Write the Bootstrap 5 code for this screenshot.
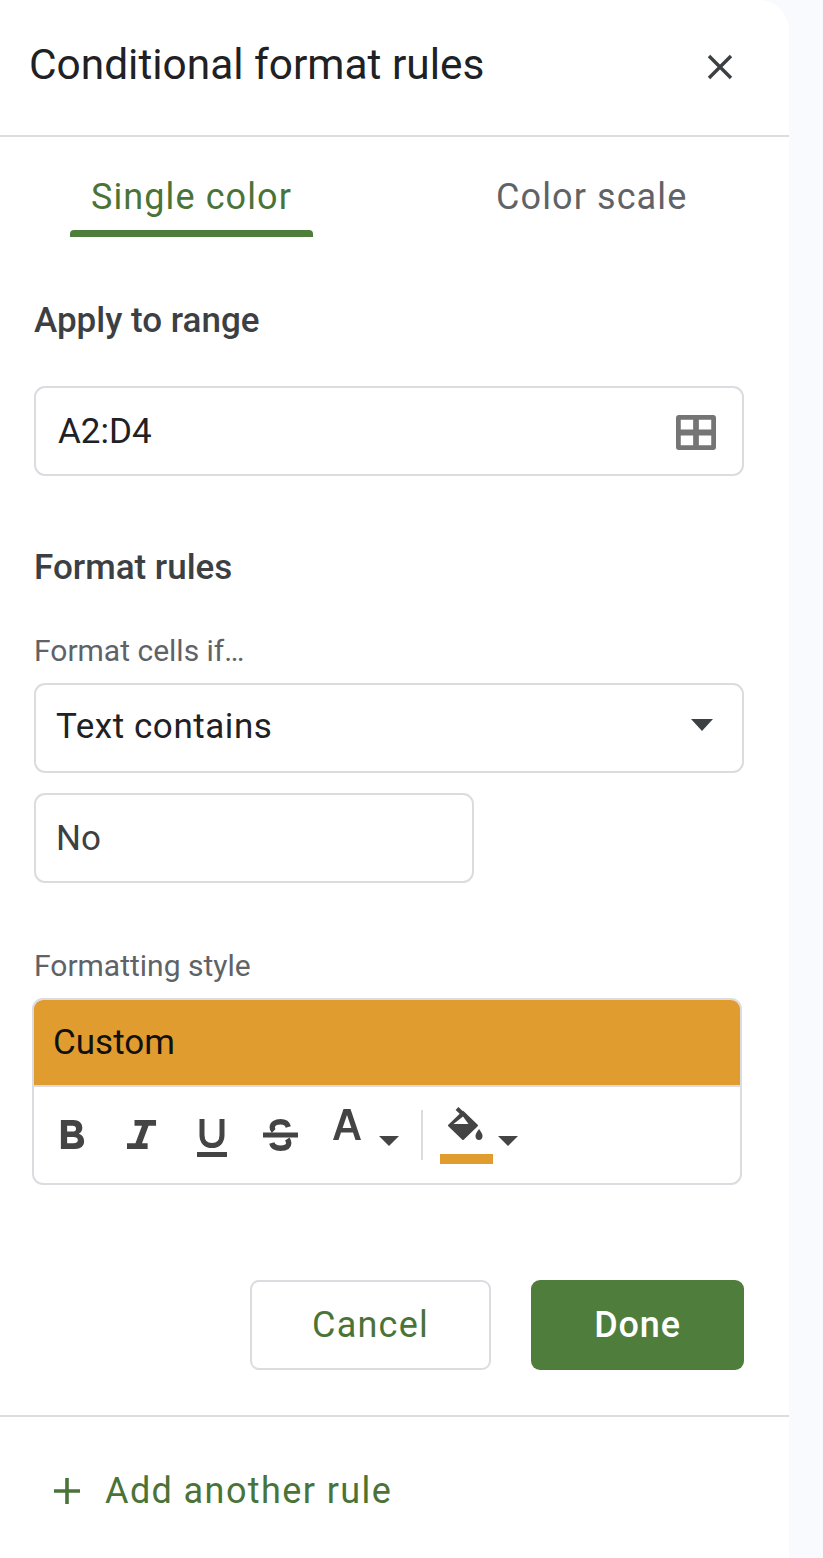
<!DOCTYPE html>
<html lang="en">
<head>
  <meta charset="UTF-8">
  <meta name="viewport" content="width=device-width, initial-scale=1.0">
  <title>Conditional format rules</title>
  <link rel="stylesheet" href="https://cdn.jsdelivr.net/npm/bootstrap@5.3.0/dist/css/bootstrap.min.css">
  <style>
    body {
      font-family: Roboto, "Liberation Sans", sans-serif;
      background-color: #f9fafd;
      color: #202124;
    }
    .side-panel {
      width: 789px;
      height: 1558px;
      background-color: #fff;
      border-top-right-radius: 30px;
    }
    .panel-head {
      height: 137px;
      padding: 0 52px 1px 29px;
      border-bottom: 2px solid #dadce0;
    }
    .panel-title {
      font-size: 42.4px;
      font-weight: 400;
      margin: 0 0 3px;
      line-height: 1;
    }
    .close-btn {
      width: 34px;
      height: 34px;
      padding: 0;
      border: 0;
      background: none;
      line-height: 0;
    }
    .tab-row {
      height: 100px;
      padding-left: 70px;
    }
    .tab-item {
      font-size: 36px;
      letter-spacing: 1.1px;
      line-height: 1;
      color: #5f6368;
      padding-top: 42px;
      text-align: center;
    }
    .tab-one {
      width: 243px;
      color: #4a7337;
    }
    .tab-two {
      margin-left: 183px;
    }
    .tab-bar {
      height: 7px;
      background-color: #4f7d3c;
      border-radius: 4px 4px 0 0;
    }
    .panel-body-area {
      padding: 0 45px 0 34px;
    }
    .section-title {
      font-size: 35px;
      font-weight: 500;
      color: #3c4043;
      line-height: 1;
      margin: 0;
    }
    .section-a { margin-top: 66px; }
    .section-b { margin-top: 74px; }
    .field-label {
      font-size: 30px;
      color: #5f6368;
      line-height: 1;
      margin: 0;
    }
    .label-a { margin-top: 51px; }
    .label-b { margin-top: 68px; }
    .field-box {
      height: 90px;
      border: 2px solid #dadce0;
      border-radius: 11px;
      font-size: 35px;
      color: #202124;
      padding: 2px 26px 0 22px;
    }
    .range-box { margin-top: 48px; }
    .select-box {
      margin-top: 17px;
      padding: 0 29px 2px 20px;
      letter-spacing: .55px;
    }
    .select-caret { margin-top: -4px; }
    .field-short {
      width: 440px;
      margin-top: 20px;
      color: #3c4043;
      padding-left: 20px;
    }
    .style-box {
      width: 710px;
      margin: 17px 0 0 -2px;
      height: 187px;
      border: 2px solid #dadce0;
      border-radius: 11px;
      overflow: hidden;
    }
    .style-preview {
      height: 87px;
      background-color: #e09c2f;
      color: #111;
      font-size: 35px;
      padding: 2px 0 0 19px;
      border-bottom: 2px solid #dadce0;
    }
    .style-tools { padding-left: 20px; }
    .tool-b { margin: 32px 0 0 6px; }
    .tool-i { margin: 32px 0 0 42px; }
    .tool-u { margin: 32px 0 0 40px; }
    .tool-s { margin: 32px 0 0 36px; }
    .tool-a { margin: 22px 0 0 35px; }
    .tool-caret { margin: 49px 0 0 18px; }
    .tool-sep {
      width: 2px;
      height: 50px;
      margin: 23px 0 0 22px;
      background-color: #dadce0;
    }
    .tool-fill { margin: 20px 0 0 17px; }
    .fill-caret { margin: 49px 0 0 5px; }
    .action-row {
      gap: 40px;
      margin-top: 95px;
    }
    .action-btn {
      height: 90px;
      font-size: 36px;
      letter-spacing: .8px;
      font-weight: 500;
      border-radius: 9px;
    }
    .btn-cancel {
      width: 241px;
      font-weight: 400;
      letter-spacing: 1.2px;
      color: #4a7337;
      background: #fff;
      border: 2px solid #dadce0;
    }
    .btn-done {
      width: 213px;
      background-color: #4f7d3c;
      border: 0;
      color: #fff;
    }
    .panel-foot {
      margin-top: 45px;
      border-top: 2px solid #dadce0;
      height: 142px;
      padding: 8px 0 0 54px;
      color: #4a7337;
      font-size: 36px;
      letter-spacing: 1.4px;
    }
    .foot-text { margin-left: 25px; }
  </style>
</head>
<body>

<div class="side-panel">
  <div class="panel-head d-flex align-items-center justify-content-between">
    <h1 class="panel-title">Conditional format rules</h1>
    <button class="close-btn" type="button" aria-label="Close">
      <svg width="34" height="34" viewBox="0 0 34 34"><path d="M6 6 28 28M28 6 6 28" stroke="#3c4043" stroke-width="3.4" fill="none"/></svg>
    </button>
  </div>

  <div class="tab-row d-flex">
    <div class="tab-item tab-one d-flex flex-column justify-content-between">
      <span>Single color</span>
      <div class="tab-bar"></div>
    </div>
    <div class="tab-item tab-two">Color scale</div>
  </div>

  <div class="panel-body-area">
    <p class="section-title section-a">Apply to range</p>
    <div class="field-box range-box d-flex align-items-center justify-content-between">
      <span>A2:D4</span>
      <svg width="40" height="35" viewBox="0 0 42 36" preserveAspectRatio="none"><path fill="#757575" fill-rule="evenodd" d="M3 0H39a3 3 0 0 1 3 3V33a3 3 0 0 1-3 3H3a3 3 0 0 1-3-3V3a3 3 0 0 1 3-3ZM5 5V15H18V5ZM24 5V15H37V5ZM5 21V31H18V21ZM24 21V31H37V21Z"/></svg>
    </div>

    <p class="section-title section-b">Format rules</p>
    <p class="field-label label-a">Format cells if…</p>
    <div class="field-box d-flex align-items-center justify-content-between select-box">
      <span>Text contains</span>
      <svg class="select-caret" width="22" height="12" viewBox="0 0 22 12"><path fill="#3c4043" d="M0 0H22L11 12Z"/></svg>
    </div>
    <div class="field-box field-short d-flex align-items-center">No</div>

    <p class="field-label label-b">Formatting style</p>
    <div class="style-box">
      <div class="style-preview d-flex align-items-center">Custom</div>
      <div class="style-tools d-flex align-items-start">
        <svg class="tool-b" width="25" height="31" viewBox="0 0 28 32" preserveAspectRatio="none"><path fill="#444" fill-rule="evenodd" d="M1 1H15C21 1 25 4 25 9C25 12 23.500 14 21 15.200C24.500 16 27 19 27 23C27 28 23 31 17 31H1ZM8 7V13H14C16.500 13 18 12 18 10C18 8 16.500 7 14 7ZM8 18.500V25H15C18 25 20 24 20 21.700C20 19.500 18 18.500 15 18.500Z"/></svg>
        <svg class="tool-i" width="30" height="31" viewBox="0 0 32 32" preserveAspectRatio="none"><path fill="#444" d="M8 1H31V7H23L16 25H22V31H0V25H9L16 7H8Z"/></svg>
        <svg class="tool-u" width="30" height="38" viewBox="0 0 30 38"><path fill="none" stroke="#444" stroke-width="5" d="M5 0V16C5 23 9 26.500 15 26.500C21 26.500 25 23 25 16V0"/><path fill="#444" d="M0 33H30V38H0Z"/></svg>
        <svg class="tool-s" width="35" height="32" viewBox="0 0 36 32" preserveAspectRatio="none"><path fill="none" stroke="#444" stroke-width="5.500" d="M26 8C25 4 22 2.800 18 2.800C13 2.800 9.500 5 9.500 8.500C9.500 10 10 11 11 12M25 20C26 21.500 26.500 22.500 26.500 24C26.500 27.500 23 29.200 18 29.200C13.500 29.200 10 28 9 24"/><path fill="#444" d="M0 13.500H36V18.500H0Z"/></svg>
        <svg class="tool-a" width="28" height="31" viewBox="0 0 28 31"><path fill="#444" fill-rule="evenodd" d="M10.500 0H17.500L28 31H22.500L20 23.500H8L5.500 31H0ZM14 6 9.600 19H18.400Z"/></svg>
        <svg class="tool-caret" width="20" height="10" viewBox="0 0 20 10"><path fill="#444" d="M0 0H20L10 10Z"/></svg>
        <span class="tool-sep"></span>
        <svg class="tool-fill" width="53" height="57" viewBox="0 0 53 57">
          <path stroke="#444" stroke-width="4" d="M17 1.500 24 8"/>
          <path fill="#444" stroke="#444" stroke-width="2" stroke-linejoin="round" d="M23 5 37 18.500 23 32 9 18.500Z"/>
          <path fill="#fff" d="M13.500 17 23 9.500 28.500 17Z"/>
          <path fill="#444" d="M39 22C41 25 42.500 26.500 42.500 29C42.500 31.500 41 33 39 33C37 33 35.500 31.500 35.500 29C35.500 26.500 37 25 39 22Z"/>
          <rect y="47" width="53" height="10" fill="#e09c2f"/>
        </svg>
        <svg class="fill-caret" width="20" height="10" viewBox="0 0 20 10"><path fill="#444" d="M0 0H20L10 10Z"/></svg>
      </div>
    </div>

    <div class="action-row d-flex justify-content-end">
      <button class="btn action-btn btn-cancel" type="button">Cancel</button>
      <button class="btn action-btn btn-done" type="button">Done</button>
    </div>
  </div>

  <div class="panel-foot d-flex align-items-center">
    <svg width="26" height="26" viewBox="0 0 26 26"><path fill="#4a7337" d="M11.200 0H14.800V11.200H26V14.800H14.800V26H11.200V14.800H0V11.200H11.200Z"/></svg>
    <span class="foot-text">Add another rule</span>
  </div>
</div>

<script src="https://cdn.jsdelivr.net/npm/bootstrap@5.3.0/dist/js/bootstrap.bundle.min.js"></script>
</body>
</html>
